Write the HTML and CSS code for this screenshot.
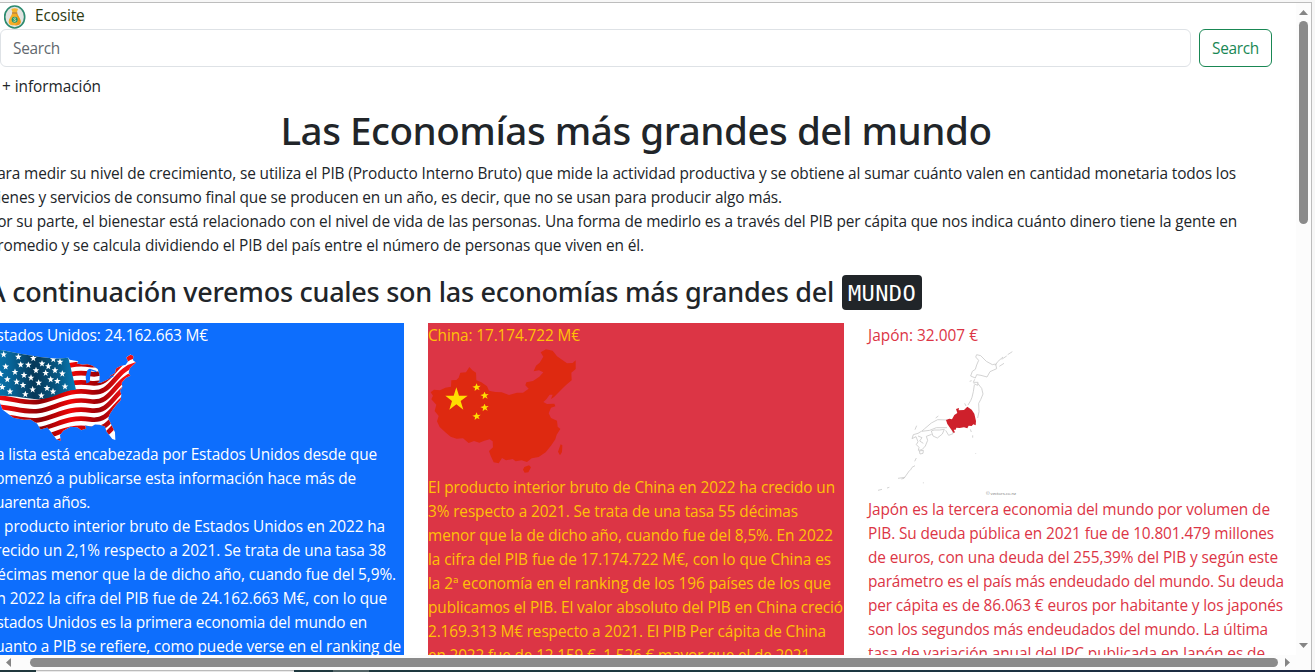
FILE: index.html
```html
<!DOCTYPE html>
<html lang="es">
<head>
<meta charset="utf-8">
<title>Ecosite</title>
<link rel="stylesheet" href="styles.css">
</head>
<body>
<div class="frame">
  <div class="viewport">
    <main class="page">
      <nav class="nav">
        <a class="brand">
          <svg class="logo" viewBox="0 0 66 72"><ellipse cx="32" cy="36" rx="30" ry="33" fill="#e2e3e1" stroke="#2d8b70" stroke-width="5"/><path d="M22 12q10-5 20 0l-4 11h-12z" fill="#f6b52c"/><path d="M25 25h14c3 8 11 17 11 25 0 9-8 11-18 11s-18-2-18-11c0-8 8-17 11-25z" fill="#f5ae28"/><path d="M39 25c3 8 11 17 11 25 0 9-8 11-18 11 14-8 10-24 3-36z" fill="#e9981c"/><path d="M24 24h16" stroke="#bd7b26" stroke-width="4"/><circle cx="32" cy="44" r="9" fill="#1d9672"/><path d="M36 40q-7-3-7 1c0 4 7 2 7 6q-2 4-8 1" fill="none" stroke="#eee9a8" stroke-width="2.5"/></svg>
          <span data-w="49.5">Ecosite</span>
        </a>
        <div class="search"><div class="input"><span data-w="47">Search</span></div><div class="button"><span data-w="47">Search</span></div></div>
        <div class="info"><span data-w="99">+ información</span></div>
      </nav>
      <h1><span data-w="711">Las Economías más grandes del mundo</span></h1>
      <section class="row intro">
        <p><span data-w="1248">Para medir su nivel de crecimiento, se utiliza el PIB (Producto Interno Bruto) que mide la actividad productiva y se obtiene al sumar cuánto valen en cantidad monetaria todos los</span>
        <span data-w="794">bienes y servicios de consumo final que se producen en un año, es decir, que no se usan para producir algo más.</span>
        <span data-w="1249">Por su parte, el bienestar está relacionado con el nivel de vida de las personas. Una forma de medirlo es a través del PIB per cápita que nos indica cuánto dinero tiene la gente en</span>
        <span data-w="656">promedio y se calcula dividiendo el PIB del país entre el número de personas que viven en él.</span></p>
        <h3><span data-w="846">A continuación veremos cuales son las economías más grandes del</span><kbd><span data-w="68">MUNDO</span></kbd></h3>
      </section>
      <section class="row columns">
        <article class="usa">
          <span data-w="220">Estados Unidos: 24.162.663 M€</span>
          <svg class="map map-usa" viewBox="-36 81 450 288" preserveAspectRatio="none">
            <defs>
              <clipPath id="usa"><path d="M-28 87L8 91 60 101 120 111 170 116 205 113 209 119 235 123 230 130 248 134 262 132 276 136 293 146 299 165 298 183 292 188 303 187 325 177 331 166 345 158 348 145 360 138 377 134 384 124 379 112 391 103 400 108 399 120 408 127 397 137 389 145 386 158 391 166 377 173 365 187 367 200 360 211 364 222 362 239 350 252 339 266 329 281 325 293 334 312 345 334 346 357 337 354 319 331 315 317 299 312 285 311 275 317 255 314 258 323 244 328 232 319 211 318 190 330 180 342 182 360 169 355 153 333 142 320 122 326 111 308 92 296 72 297 40 291 22 278 8 267 0 247-14 230-28 200z"/></clipPath>
              <linearGradient id="canton"><stop offset="0" stop-color="#087bb8"/><stop offset=".25" stop-color="#07669a"/><stop offset=".52" stop-color="#063858"/><stop offset=".78" stop-color="#075681"/><stop offset="1" stop-color="#087db9"/></linearGradient>
              <linearGradient id="red" gradientUnits="userSpaceOnUse" x1="0" y1="0" x2="410" y2="0"><stop offset="0" stop-color="#f20a0c"/><stop offset=".3" stop-color="#8b0004"/><stop offset=".52" stop-color="#f00506"/><stop offset=".72" stop-color="#9b0006"/><stop offset=".9" stop-color="#ef1114"/></linearGradient>
              <path id="stripe" d="M-36 230C30 228 65 250 115 244S200 204 270 215 340 146 414 131"/>
              <path id="star" d="M0-10L3-3 10-3 4 2 6 9 0 5-6 9-4 2-10-3-3-3z"/>
            </defs>
            <g clip-path="url(#usa)"><path fill="#fff" d="M-36 80h450v290H-36z"/>
              <g fill="none" stroke="url(#red)" stroke-width="14"><use href="#stripe" y="-81"/><use href="#stripe" y="-54"/><use href="#stripe" y="-27"/><use href="#stripe"/><use href="#stripe" y="27"/><use href="#stripe" y="54"/><use href="#stripe" y="81"/><use href="#stripe" y="108"/><use href="#stripe" y="135"/></g>
              <path fill="url(#canton)" d="M-36 80L205 113 228 208C185 210 158 237 115 236S40 220-36 228z"/>
              <g class="stars"></g>
            </g>
            <path d="M262 150q6-7 12-3l-3 18-2 20-10 4-2-20z" fill="#0d6efd"/><path d="M273 149l16 5M322 175l18-8" stroke="#0d6efd" stroke-width="4"/>
          </svg>
          <span data-w="389">La lista está encabezada por Estados Unidos desde que</span>
          <span data-w="368">comenzó a publicarse esta información hace más de</span>
          <span data-w="102">cuarenta años.</span>
          <span data-w="397">El producto interior bruto de Estados Unidos en 2022 ha</span>
          <span data-w="398">crecido un 2,1% respecto a 2021. Se trata de una tasa 38</span>
          <span data-w="408">décimas menor que la de dicho año, cuando fue del 5,9%.</span>
          <span data-w="399">En 2022 la cifra del PIB fue de 24.162.663 M€, con lo que</span>
          <span data-w="379">Estados Unidos es la primera economia del mundo en</span>
          <span data-w="413">cuanto a PIB se refiere, como puede verse en el ranking de</span>
        </article>
        <article class="china">
          <span data-w="152">China: 17.174.722 M€</span>
          <svg class="map map-china" viewBox="24 81 450 387">
            <path fill="#de2910" d="M32 217L42 209 60 211 76 203 93 200 94 181 109 180 116 173 121 158 138 157 148 141 157 151 168 158 169 181 184 187 201 199 207 212 226 216 245 217 267 225 291 218 309 218 326 206 316 196 319 187 339 183 358 170 370 157 357 151 341 154 348 137 359 128 370 110 362 97 378 88 398 92 411 109 426 119 441 130 458 129 467 121 467 147 454 158 455 181 439 194 428 205 417 216 402 231 393 237 398 224 389 224 379 238 370 246 381 252 403 251 406 259 393 263 386 280 393 294 411 302 413 320 421 327 410 344 406 358 394 376 377 397 356 411 335 415 321 426 305 421 287 424 278 417 258 421 246 414 236 430 221 427 212 407 207 393 219 382 218 364 209 358 193 362 178 368 162 363 146 369 129 355 110 356 92 350 76 337 59 321 51 304 56 288 44 273 49 254 34 238 39 227zM422 373l5 3-1 20-6 10-6-11zM313 441l14-5 6 6-8 15-11 1-5-9z"/>
            <g fill="#ffde00"><path d="M109 202l8 25h26l-21 16 8 26-21-16-21 16 8-26-20-16h25z"/><path id="cs" d="M170 190l3 8 9-1-7 6 4 8-8-4-7 6 1-9-8-4 9-2z"/><use href="#cs" x="24" y="25"/><use href="#cs" x="24" y="61"/><use href="#cs" y="87"/></g>
          </svg>
          <span data-w="407">El producto interior bruto de China en 2022 ha crecido un</span>
          <span data-w="370">3% respecto a 2021. Se trata de una tasa 55 décimas</span>
          <span data-w="405">menor que la de dicho año, cuando fue del 8,5%. En 2022</span>
          <span data-w="403">la cifra del PIB fue de 17.174.722 M€, con lo que China es</span>
          <span data-w="403">la 2ª economía en el ranking de los 196 países de los que</span>
          <span data-w="415">publicamos el PIB. El valor absoluto del PIB en China creció</span>
          <span data-w="398">2.169.313 M€ respecto a 2021. El PIB Per cápita de China</span>
          <span data-w="386">en 2022 fue de 12.159 €, 1.526 € mayor que el de 2021.</span>
        </article>
        <article class="japan">
          <span data-w="110">Japón: 32.007 €</span>
          <svg class="map map-japan" viewBox="24 81 450 450">
            <g fill="none" stroke="#c8c8c8" stroke-width="2.4"><path d="M350 104l12 3 17 17 18 10 10-2 3 14-20 9-9 16-18-5-13-2-4 10-14-6 5-14 9-6 4-13 6-14-9-10zM406 136l7-11 16-14M425 118l15-10M443 104l14-9M418 139l14-9M344 178l-4 9 14 0-1 9-12-5M335 182l-6 2M343 195l-3 20-4 17-4 10-8 13M353 190l12 15 4 17-7 17-6 11 1 25-4 19M318 258l-4-8M262 300l-29-1-19 10-20 17-9 8 24-3 20-8 32 0M227 294l8-6M214 333l8-3 16 0 15-2-6 14-15 12-13-6zM257 331l9 15 13-5-2-11M165 329l5-12M184 334l-10 6-14 4-4 12 12-6 6 15-5 9 8 8-2 9 11-2 10-11 7-17-4-12 16-6M174 348l12 5-7 10 11 7M178 393l12-2-1 9-9 2zM169 414l-5 10M165 437l-9 5-5 9M149 451l-17 24-8 2M135 472l-21 3M88 502l-7 2M66 508l-12 3M331 328l3 8M338 346l0 7M347 400v2M190 487v3"/></g>
            <path fill="#ce202b" d="M258 300l10-4 8 2 7-13 9-6-4-12 9-3-1 7 16-1 10-10 13 9 8 12 5 22-1 13-7-3-5 5-9-1-4 8-10-3-13 2-10-1-2 6-6 0 4 8-4 2-9-13-10-14z"/><text x="378" y="524" textLength="90">© vectors.co.nz</text>
          </svg>
          <span data-w="402">Japón es la tercera economia del mundo por volumen de</span>
          <span data-w="406">PIB. Su deuda pública en 2021 fue de 10.801.479 millones</span>
          <span data-w="410">de euros, con una deuda del 255,39% del PIB y según este</span>
          <span data-w="416">parámetro es el país más endeudado del mundo. Su deuda</span>
          <span data-w="415">per cápita es de 86.063 € euros por habitante y los japonés</span>
          <span data-w="400">son los segundos más endeudados del mundo. La última</span>
          <span data-w="397">tasa de variación anual del IPC publicada en Japón es de</span>
        </article>
      </section>
    </main>
    <aside class="vbar"><i class="up"></i><b></b><i class="down"></i></aside>
  </div>
  <div class="hbar"><i class="left"></i><b></b><i class="right"></i></div>
</div>
<footer class="desk"><i></i><b></b></footer>
<script src="main.js"></script>
</body>
</html>
```
FILE: styles.css
```css
* { box-sizing: border-box; }
body { display: flow-root; margin: 0; height: 672px; overflow: hidden; background: #f7f7f7; color: #212529; font: 15.4px/24px "Open Sans", "Noto Sans", sans-serif; }
.frame { width: 1312px; height: 668px; margin-top: 2px; border: solid #bdbdbd; border-width: 1px 1px 0 0; background: #fcfcfc; overflow: hidden; }
.viewport { display: flex; height: 652px; }
.page { width: 1296px; height: 652px; flex: none; overflow: hidden; background: #fff; }
[data-w] { display: block; width: max-content; white-space: nowrap; }
.nav { height: 103px; }
.brand { display: flex; height: 26px; padding: 1px 0 0 4px; gap: 9px; color: #2c3a12; }
.logo { width: 22px; height: 24px; margin-top: 1px; }
.search { display: flex; gap: 8px; }
.input, .button { height: 38px; border: 1px solid #dee2e6; border-radius: 6px; padding: 7px 12px 5px; }
.input { width: 1191px; color: #62686e; }
.button { width: 73px; border-color: #198754; color: #198754; }
.info { padding: 8px 0 0 2px; }
h1 { width: 1272px; height: 48px; margin: 0 0 8px; font: 500 38.6px/48px "Noto Sans", sans-serif; display: flex; justify-content: center; }
.row { margin-left: -12px; }
p { margin: 0 0 17px; }
h3 { display: flex; gap: 8px; margin: 0 0 13px; height: 35px; font: 500 27px/33px "Noto Sans", sans-serif; }
kbd { width: 80px; height: 35px; padding: 1px 6px; border-radius: 4px; background: #212529; color: #fff; font: 22px/36px "DejaVu Sans Mono", monospace; }
.columns { display: grid; grid-template-columns: repeat(3, 416px); gap: 24px; }
article { height: 340px; padding-top: 1px; }
.usa { background: #0d6efd; color: #fff; }
.china { background: #dc3545; color: #ffc107; }
.japan { color: #dc3545; }
.map { display: block; width: 150px; margin-top: -1px; }
.map-usa { height: 97px; margin-bottom: -1px; }
.map-china { height: 129px; }
.map-japan { height: 150px; margin-bottom: 1px; }
.map text { fill: #777; font-size: 13px; }
.stars { fill: #fff; }
.vbar { display: flex; flex-direction: column; align-items: center; width: 15px; padding: 7px 0 7px; }
.vbar b { width: 9px; height: 203px; margin: 6px 0 auto; border-radius: 5px; background: #8b8b8b; }
.vbar i, .hbar i { background: #858585; }
.up, .down { width: 9px; height: 5px; clip-path: polygon(50% 0, 100% 100%, 0 100%); }
.down { transform: scaleY(-1); }
.hbar { display: flex; align-items: center; height: 15px; padding: 0 20px 0 6px; }
.hbar b { width: 1248px; height: 9px; margin: 0 7px 0 19px; border-radius: 5px; background: #8b8b8b; }
.left, .right { width: 5px; height: 9px; clip-path: polygon(0 50%, 100% 0, 100% 100%); }
.right { transform: scaleX(-1); }
.desk { display: flex; height: 2px; padding-left: 36px; background: linear-gradient(90deg, #20383d, #1b3941 60%, #1c2742); }
.desk i { width: 258px; background: #e9e9e9; border-top: 1px solid #bbb; }
.desk b { width: 36px; margin-left: 39px; background: #526466; }
```
FILE: main.js
```js
// Track each line of text to its set measure.
document.querySelectorAll('[data-w]').forEach(function (el) {
  var gap = (el.dataset.w - el.getBoundingClientRect().width) / el.textContent.length;
  el.style.letterSpacing = gap + 'px';
});

// Stars on the flag's blue field.
var stars = [[-22,118],[11,103],[55,110],[100,114],[160,117],[180,125],[-15,153],[17,139],[62,133],[85,134],[126,130],[145,138],[2,161],[45,155],[108,150],[165,150],[187,160],[22,177],[72,164],[93,172],[137,158],[-5,193],[50,184],[116,187],[152,177],[172,182],[7,200],[69,194],[98,207],[141,203],[195,198],[30,213],[76,221],[124,225],[159,213]];
document.querySelector('.stars').innerHTML = stars.map(function (s) {
  return '<use href="#star" x="' + s[0] + '" y="' + s[1] + '"/>';
}).join('');
```
